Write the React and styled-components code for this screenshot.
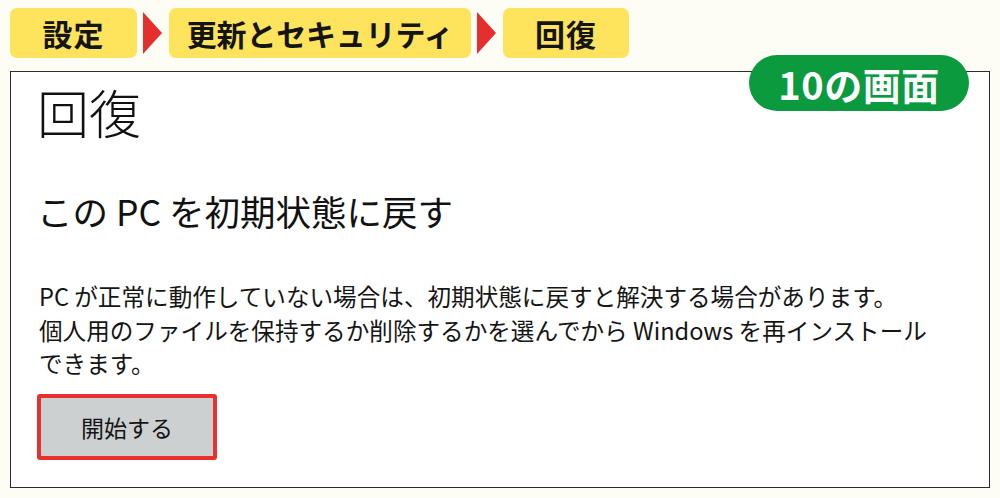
import React from 'react'
import styled, { createGlobalStyle } from 'styled-components'

const GlobalStyle = createGlobalStyle`
    html, body {
        margin:0;
        padding:0;
        background:#fdfdf6;
    }
    body {
        font-family:"Noto Sans CJK JP", "Noto Sans", sans-serif;
        color:#111;
    }
`

const Page = styled.div`
    width:1000px;
    height:498px;
    box-sizing:border-box;
    padding:8px 10px 0 10px;
    overflow:hidden;
`

const Crumbs = styled.div`
    display:flex;
    align-items:center;
    height:50px;
`

const Crumb = styled.div`
    width:${props => props.width}px;
    height:50px;
    box-sizing:border-box;
    background:#fee35c;
    border-radius:7px;
    display:flex;
    align-items:center;
    justify-content:center;
    font-size:30px;
    font-weight:700;
    color:#141414;
    letter-spacing:${props => props.spacing || 0.5}px;
`

const Arrow = styled.div`
    width:0;
    height:0;
    margin:0 7px 0 6px;
    border-top:21px solid transparent;
    border-bottom:21px solid transparent;
    border-left:19px solid #e52f2f;
`

const Panel = styled.div`
    position:relative;
    margin-top:13px;
    width:980px;
    height:417px;
    box-sizing:border-box;
    background:#fff;
    border:1.5px solid #2b2b2b;
    padding:14px 26px 0 26px;
`

const Badge = styled.div`
    position:absolute;
    top:-17px;
    right:20px;
    width:220px;
    height:56px;
    border-radius:28px;
    background:#0c9a3f;
    color:#fff;
    display:flex;
    align-items:center;
    justify-content:center;
    font-size:38px;
    font-weight:700;
    letter-spacing:0.5px;
`

const Title = styled.h1`
    margin:0;
    font-size:52px;
    line-height:52px;
    font-weight:300;
`

const Heading = styled.h2`
    margin:55px 0 0 0;
    font-size:35.5px;
    line-height:35px;
    font-weight:400;
`

const Body = styled.p`
    margin:52px 0 0 2px;
    font-size:23.6px;
    line-height:33.5px;
    font-weight:400;
    color:#151515;
`

const StartButton = styled.button`
    margin-top:13px;
    width:180px;
    height:66px;
    box-sizing:border-box;
    border:4px solid #e8302f;
    border-radius:3px;
    background:#ccd0d1;
    font-family:"Noto Sans CJK JP", "Noto Sans", sans-serif;
    font-size:23px;
    color:#151515;
    cursor:pointer;
`

export default function App(){
    return (
        <Page>
            <GlobalStyle />
            <Crumbs>
                <Crumb width={127} spacing={1}>設定</Crumb>
                <Arrow />
                <Crumb width={302} spacing={-0.2}>更新とセキュリティ</Crumb>
                <Arrow />
                <Crumb width={126} spacing={1}>回復</Crumb>
            </Crumbs>
            <Panel>
                <Badge>10の画面</Badge>
                <Title>回復</Title>
                <Heading>この PC を初期状態に戻す</Heading>
                <Body>
                    PC が正常に動作していない場合は、初期状態に戻すと解決する場合があります。<br />
                    個人用のファイルを保持するか削除するかを選んでから Windows を再インストール<br />
                    できます。
                </Body>
                <StartButton>開始する</StartButton>
            </Panel>
        </Page>
    )
}
